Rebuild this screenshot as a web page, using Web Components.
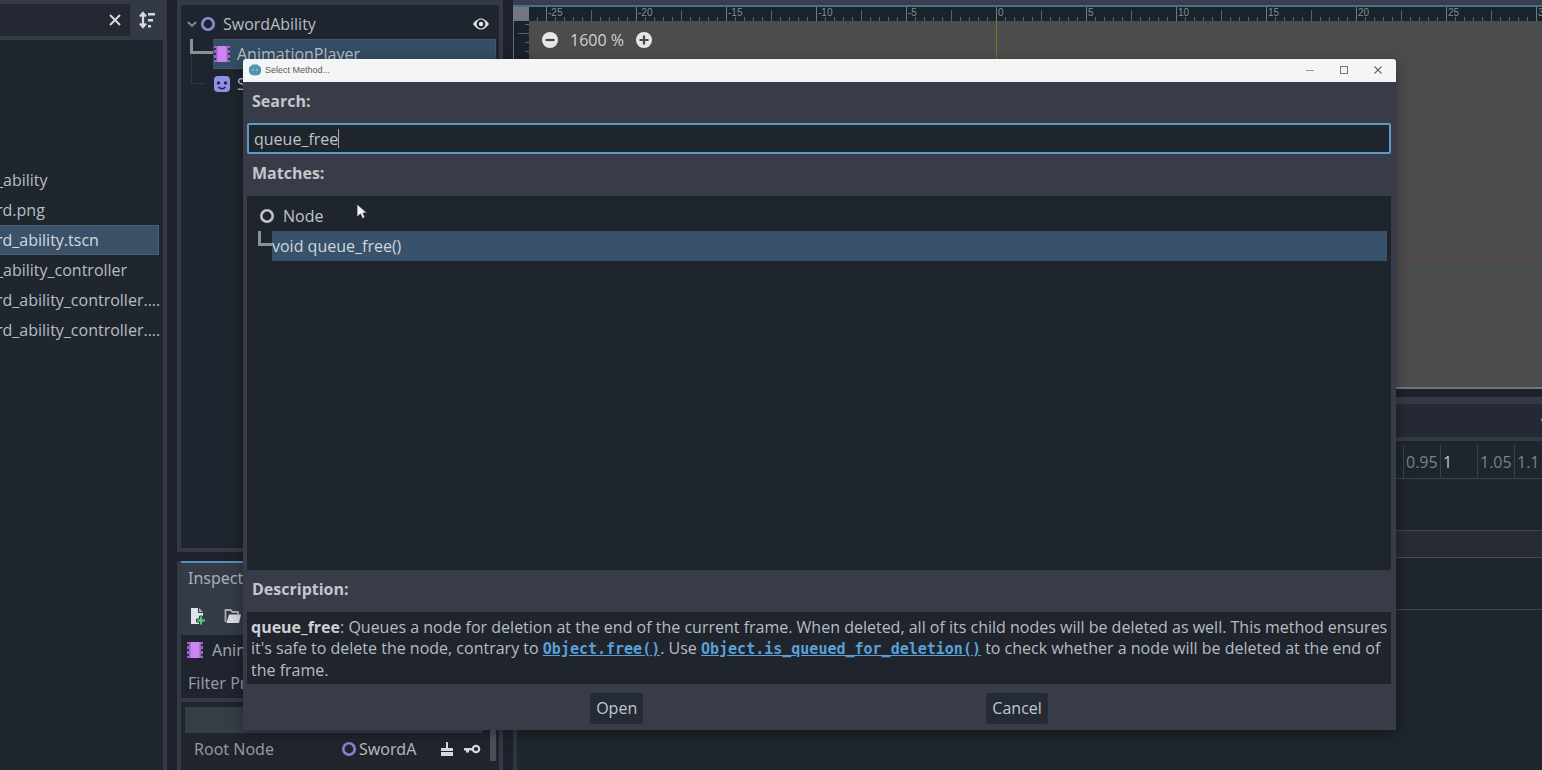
<!DOCTYPE html>
<html lang="en">
<head>
<meta charset="utf-8">
<title>Select Method</title>
<style>
html,body{margin:0;height:100%}
body{background:#1c212b;color:#b9bdc3;font:16px/30px "Open Sans","Noto Sans",sans-serif;overflow:hidden}
</style>
</head>
<body>
<editor-shell></editor-shell>
<script>
const define = (name, html, setup) => customElements.define(name, class extends HTMLElement {
  connectedCallback() {
    if (this.shadowRoot) return;
    const t = document.createElement('template');
    t.innerHTML = '<style>*{box-sizing:border-box}:host{display:block}</style>' + html;
    this.attachShadow({mode: 'open'}).append(t.content.cloneNode(true));
    if (setup) setup(this, this.shadowRoot);
  }
});

const ICONS = {
  node: '<circle cx="9" cy="9" r="5.7" fill="none" stroke="currentColor" stroke-width="2.6"/>',
  close: '<path d="M4 4l10 10M14 4L4 14" fill="none" stroke="currentColor" stroke-width="2"/>',
  sort: '<path d="M5 3v12M2 5.5L5 2l3 3.500M2 12.500L5 16l3-3.500" fill="none" stroke="currentColor" stroke-width="2.200"/><path d="M10 2h7v2.400h-7zM10 8h5v2.400h-5zM10 14h3v2.400h-3z" fill="currentColor"/>',
  chevron: '<path d="M5 7l4 4 4-4" fill="none" stroke="#858a92" stroke-width="1.800"/>',
  eye: '<path d="M1 9Q9-2 17 9Q9 20 1 9z" fill="#e4e5e8"/><circle cx="9" cy="9" r="4.400" fill="#1f252e"/><circle cx="9" cy="9" r="2.200" fill="#e4e5e8"/>',
  film: '<path d="M1 1h16v16H1z" fill="#9b63c4"/><path d="M4.500 1h9v16h-9z" fill="#cb85f5"/><path d="M1 3h2v2H1zM1 8h2v2H1zM1 13h2v2H1zM15 3h2v2h-2zM15 8h2v2h-2zM15 13h2v2h-2z" fill="#2c3444"/>',
  sprite: '<rect x="1" y="1" width="16" height="16" rx="4" fill="#918fe6"/><circle cx="5.500" cy="8" r="1.700" fill="#232743"/><circle cx="12.500" cy="8" r="1.700" fill="#232743"/><path d="M5.500 12q3.500 3.500 7 0" fill="none" stroke="#232743" stroke-width="1.600"/>',
  file: '<path d="M3 1h7v5h5v11H3z" fill="#e2e4e8"/><path d="M11 1l4 4h-4z" fill="#aeb4bd"/><path d="M11.500 9h3v3h3v3h-3v3h-3v-3h-3v-3h3z" fill="#4fd070" stroke="#343b47"/>',
  folder: '<path d="M1.500 15V3h5l2 2H14v2.500" fill="none" stroke="#a5abb4" stroke-width="1.800"/><path d="M5 7.500h12L15 16H2.500z" fill="#d9dbe0"/>',
  minus: '<circle cx="9" cy="9" r="8" fill="#e6e6e6"/><path d="M4.500 9h9" stroke="#484848" stroke-width="2.200"/>',
  plus: '<circle cx="9" cy="9" r="8" fill="#e6e6e6"/><path d="M4.500 9h9M9 4.500v9" stroke="#484848" stroke-width="2.200"/>',
  brush: '<path d="M8 2h2v6h5v3H3V8h5z" fill="#d5d7da"/><path d="M3 12h12v4H3z" fill="#d5d7da"/>',
  key: '<circle cx="13" cy="9" r="3.200" fill="none" stroke="#d5d7da" stroke-width="2.200"/><path d="M10 8H1v2.500h2v2h3v-2h4z" fill="#d5d7da"/>',
  winmin: '<path d="M5 9.500h8" stroke="#999" stroke-width="1"/>',
  winmax: '<rect x="5.500" y="5.500" width="7" height="7" fill="none" stroke="#777"/>',
  winclose: '<path d="M5.500 5.500l7 7M12.500 5.500l-7 7" stroke="#666" stroke-width="1.100"/>',
  godot: '<path d="M5 5L6.500 3.500h5L13 5l2 1.500V11q-1 3.500-6 3.500T3 11V6.500z" fill="#5095ad"/><circle cx="7" cy="9" r="1" fill="#87b7c8"/><circle cx="11" cy="9" r="1" fill="#87b7c8"/>',
  pointer: '<path d="M4 1v13l3.500-3 2 4.500 2.500-1-2-4.500H14z" fill="#f3f3f3" stroke="#23272f" stroke-width=".800"/>'
};
define('ed-icon', '<style>:host{width:18px;height:18px;flex:none}svg{display:block}</style><svg width="18" height="18" viewBox="0 0 18 18" aria-hidden="true"></svg>',
  (el, r) => { r.querySelector('svg').innerHTML = ICONS[el.getAttribute('name')]; });

define('file-dock', `<style>
:host{width:167px;flex:none;display:flex;flex-direction:column;background:#1f262e;border-right:4px solid #343a45;overflow:hidden}
.bar{height:40px;flex:none;display:flex;border-top:4px solid #343a45;border-bottom:4px solid #343a45;background:#343a45;color:#d7d9dd}
.filter{flex:1;background:#232832;display:flex;align-items:center;justify-content:flex-end;padding-right:6px}
button{all:unset;width:33px;display:flex;align-items:center;justify-content:center}
.filter button{width:18px}
input{all:unset;flex:1;width:20px}
ul{list-style:none;margin:0 0 0 -4px;padding:125px 4px 0 0}
li{height:30px;white-space:nowrap}
.on{background:#3b5069;border:1px solid #4c5c70;border-left:0;line-height:28px;color:#d5dae0}
</style>
<div class="bar"><div class="filter"><input aria-label="Filter files"><button aria-label="Clear"><ed-icon name="close"></ed-icon></button></div><button aria-label="Sort files"><ed-icon name="sort"></ed-icon></button></div>
<ul><li>_ability</li><li>rd.png</li><li class="on">rd_ability.tscn</li><li>_ability_controller</li><li>rd_ability_controller....</li><li>rd_ability_controller....</li></ul>`);

define('scene-dock', `<style>
:host{height:552px;flex:none;background:#1f252e;border:5px solid #343a45;border-width:5px 4px 4px;padding:4px 3px}
.row{display:flex;height:30px;align-items:center}
.root{padding-left:0}.root span{flex:1;padding-left:6px}
.root ed-icon{color:#8f8bdc}.root ed-icon:first-child{margin:0 -2px 0 -1px}
.root .eye{margin-right:6px}
.kids{display:grid;grid-template-columns:29px 1fr}
.sel{background:#334d63;border:1px solid #43586b;border-left:0}
.row span{white-space:nowrap}.kids span{padding-left:6px}
.b{border-left:3px solid #8b9098;border-bottom:3px solid #8b9098;height:15px;margin-left:6px}
.c{border-left:1px solid #30363f;border-bottom:1px solid #30363f;height:30px;margin:-15px 8px 0 7px}
</style>
<div class="row root"><ed-icon name="chevron"></ed-icon><ed-icon name="node"></ed-icon><span>SwordAbility</span><ed-icon class="eye" name="eye"></ed-icon></div>
<div class="kids"><div class="b"></div><div class="row sel"><ed-icon name="film"></ed-icon><span>AnimationPlayer</span></div>
<div class="c"></div><div class="row"><ed-icon name="sprite"></ed-icon><span>Sprite2D</span></div></div>`);

define('inspector-dock', `<style>
:host{flex:1;border:solid #343a45;border-width:0 4px;background:#1f242d;overflow:hidden;font-family:"Noto Sans",sans-serif}
.head{background:#343b47;border-top:2px solid #5590bd;margin:0 -4px;padding:0 11px;height:74px;color:#a9b0b9}
.tools{display:flex;gap:18px;height:46px;align-items:center}
.box{height:29px;line-height:28px;background:#1f2430;display:flex;align-items:center;gap:8px;padding:0 5px;color:#9fa4ac;white-space:nowrap}
.f{margin-top:4px;border:0;width:100%;font:inherit;color:#969ba4;padding:0 7px}
input::placeholder{color:#969ba4;opacity:1}
.line{height:4px;background:#343a45;margin-top:1px}
.body{display:flex;padding:5px 3px 0 4px;justify-content:space-between}
.props{width:298px}
.cat{height:26px;background:#373d47}
.p{display:flex;align-items:center;height:30px;padding-left:9px;margin-top:1px;color:#93989f}
.p label{width:146px}.p .v{flex:1;color:#b2b6bc;padding-left:1px}.p ed-icon{color:#8782d0}
.acts{display:flex;gap:7px;padding-right:2px}
.grab{width:6px;height:54px;background:#4b5058}
</style>
<div class="head"><div>Inspector</div><div class="tools"><ed-icon name="file"></ed-icon><ed-icon name="folder"></ed-icon></div></div>
<div class="box"><ed-icon name="film"></ed-icon>AnimationPlayer</div>
<input class="box f" placeholder="Filter Properties" aria-label="Filter Properties">
<div class="line"></div>
<div class="body"><div class="props"><div class="cat"></div><div class="p"><label>Root Node</label><ed-icon name="node"></ed-icon><span class="v">SwordA</span><div class="acts"><ed-icon name="brush"></ed-icon><ed-icon name="key"></ed-icon></div></div></div><div class="grab"></div></div>`);

define('canvas-ruler', `<style>
:host{height:16px;display:flex;overflow:hidden;background:#19232c;border-top:2px solid #47708f;font:10px/12px "Liberation Sans",sans-serif;color:#878d94}
.corner{width:16px;flex:none;background:#727782}
.scale{flex:1;display:flex;padding-left:17px;overflow:hidden;
background:repeating-linear-gradient(90deg,#59626b 0 1px,transparent 1px 9px) 8px 100%/100% 4px no-repeat,
repeating-linear-gradient(90deg,#59626b 0 1px,transparent 1px 90px) 62px 100%/100% 11px no-repeat}
.scale span{width:90px;flex:none;border-left:1px solid #727a83;padding-left:1px}
</style><div class="corner"></div><div class="scale"></div>`, (el, r) => {
  const s = r.querySelector('.scale');
  for (let n = -25; n <= 30; n += 5) { const c = document.createElement('span'); c.textContent = n; s.append(c); }
});

define('canvas-view', `<style>
:host{height:389px;flex:none;display:flex;flex-direction:column;background:#4c4c4c;border-top:5px solid #383e4b;border-bottom:2px solid #707681}
.view{flex:1;position:relative;display:flex}
.vr{width:16px;background:repeating-linear-gradient(#59626b 0 1px,transparent 1px 9px) 100% 3px/4px 100% no-repeat,repeating-linear-gradient(#59626b 0 1px,transparent 1px 45px) 100% 12px/11px 100% no-repeat,#19212b;border-left:1px solid #656b76}
.zoom{display:flex;gap:11px;height:38px;align-items:center;padding-left:12px;color:#d2d2d2}
button{all:unset;display:block}
.y,.x{position:absolute;background:#77762d}.y{left:483px;top:0;bottom:0;width:1px}
.x{left:16px;right:0;top:237px;height:1px;background:#664343}
</style><canvas-ruler></canvas-ruler><div class="view"><div class="vr"></div><div class="zoom"><button aria-label="Zoom out"><ed-icon name="minus"></ed-icon></button><span>1600 %</span><button aria-label="Zoom in"><ed-icon name="plus"></ed-icon></button></div><div class="y"></div><div class="x"></div></div>`);

define('animation-panel', `<style>
:host{flex:1;margin-top:8px;background:#1f252d;border-left:4px solid #30363f;border-top:7px solid #343a45;overflow:hidden}
.bar{height:37px;background:#242933;border-bottom:4px solid #343a45;display:flex;justify-content:flex-end;align-items:center}
.bar ed-icon{margin-right:-12px}
.time{height:38px;border-bottom:1px solid #3b414a;display:flex;justify-content:flex-end;padding-top:4px;color:#7a8088}
.time span{width:37px;flex:none;border-left:1px solid #3b414a;padding-left:2px;line-height:34px}
.time span:last-child{width:28px;white-space:nowrap}
.now{color:#c5c8cc}
.lane{height:52px;border-bottom:1px solid #3f444d}
.alt{height:27px;background:#272b34;border-bottom-color:#484c54}
</style><div class="bar"><ed-icon name="chevron"></ed-icon></div><div class="time"><span>0.95</span><span class="now">1</span><span>1.05</span><span>1.1</span></div><div class="lane"></div><div class="lane alt"></div><div class="lane"></div>`);

define('method-tree', `<style>
:host{flex:1;background:#1f252d;padding:5px 4px;position:relative;color:#c0c4c9}
.row{display:flex;height:30px;align-items:center;padding-left:7px;gap:7px}
.kid{display:grid;grid-template-columns:21px 1fr}
.b{height:15px;margin-left:7px;border-left:3px solid #8b9098;border-bottom:3px solid #8b9098}
.sel{background:#37526a;color:#d0d7de;height:30px}
.pointer{position:absolute;left:106px;top:7px}
</style><div class="row"><ed-icon name="node"></ed-icon><span>Node</span></div><div class="kid"><div class="b"></div><div class="sel">void queue_free()</div></div><ed-icon class="pointer" name="pointer"></ed-icon>`);

define('window-titlebar', `<style>
:host{height:23px;flex:none;display:flex;align-items:center;background:#f4f5f7;border-radius:3px 3px 0 0;color:#5c5c5c;font:9px/20px "Liberation Sans",sans-serif;padding:0 1px 2px 3px}
span{flex:1;padding-left:1px}
button{all:unset;width:34px;display:flex;justify-content:center}
</style><ed-icon name="godot"></ed-icon><span><slot></slot></span><button aria-label="Minimize"><ed-icon name="winmin"></ed-icon></button><button aria-label="Maximize"><ed-icon name="winmax"></ed-icon></button><button aria-label="Close"><ed-icon name="winclose"></ed-icon></button>`);

define('method-dialog', `<style>
:host{position:absolute;left:243px;right:146px;top:59px;bottom:40px;display:flex;flex-direction:column;box-shadow:0 3px 14px rgba(0,0,0,.35);border-radius:3px 3px 0 0}
.body{flex:1;display:flex;flex-direction:column;background:#373c48;padding:0 5px 0 4px}
label,h2{display:block;margin:0;height:42px;font:bold 16px/38px "Open Sans","Noto Sans",sans-serif;padding-left:5px;color:#c3c6cc}
label{height:41px}
.in{position:relative;height:31px}
input{display:block;width:100%;height:31px;border:2px solid #5c9acb;border-radius:2px;background:#1f252d;color:#bfc3c7;font:inherit;line-height:26px;padding:0 5px;outline:0}
.caret{position:absolute;left:91px;top:6px;width:1px;height:19px;background:#a6aab0}
p{margin:0;height:72px;background:#1f242d;padding:5px 0 0 4px;line-height:21px;color:#b8bcc2}
b{color:#cdd0d4}
a{font:bold 15px/21px "DejaVu Sans Mono",monospace;color:#5aa0d6;text-decoration:underline}
.foot{height:46px;display:flex;justify-content:space-evenly;align-items:center}
button{border:0;border-radius:2px;background:#252b36;color:#c3c6cb;font:inherit;line-height:31px;height:31px;padding:0 6px;margin-top:3px}
</style><window-titlebar>Select Method...</window-titlebar>
<div class="body"><label for="q">Search:</label><div class="in"><input id="q" value="queue_free"><span class="caret"></span></div>
<h2>Matches:</h2><method-tree></method-tree><h2>Description:</h2>
<p><b>queue_free</b>: Queues a node for deletion at the end of the current frame. When deleted, all of its child nodes will be deleted as well. This method ensures it's safe to delete the node, contrary to <a href="#free">Object.free()</a>. Use <a href="#queued">Object.is_queued_for_deletion()</a> to check whether a node will be deleted at the end of the frame.</p>
<div class="foot"><button>Open</button><button>Cancel</button></div></div>`);

define('editor-shell', `<style>
:host{display:flex;height:100vh;position:relative;overflow:hidden}
.mid{width:326px;flex:none;margin:0 10px;display:flex;flex-direction:column;gap:9px}
.main{flex:1;min-width:0;display:flex;flex-direction:column}
</style><file-dock></file-dock><div class="mid"><scene-dock></scene-dock><inspector-dock></inspector-dock></div><div class="main"><canvas-view></canvas-view><animation-panel></animation-panel></div><method-dialog></method-dialog>`);
</script>
</body>
</html>
